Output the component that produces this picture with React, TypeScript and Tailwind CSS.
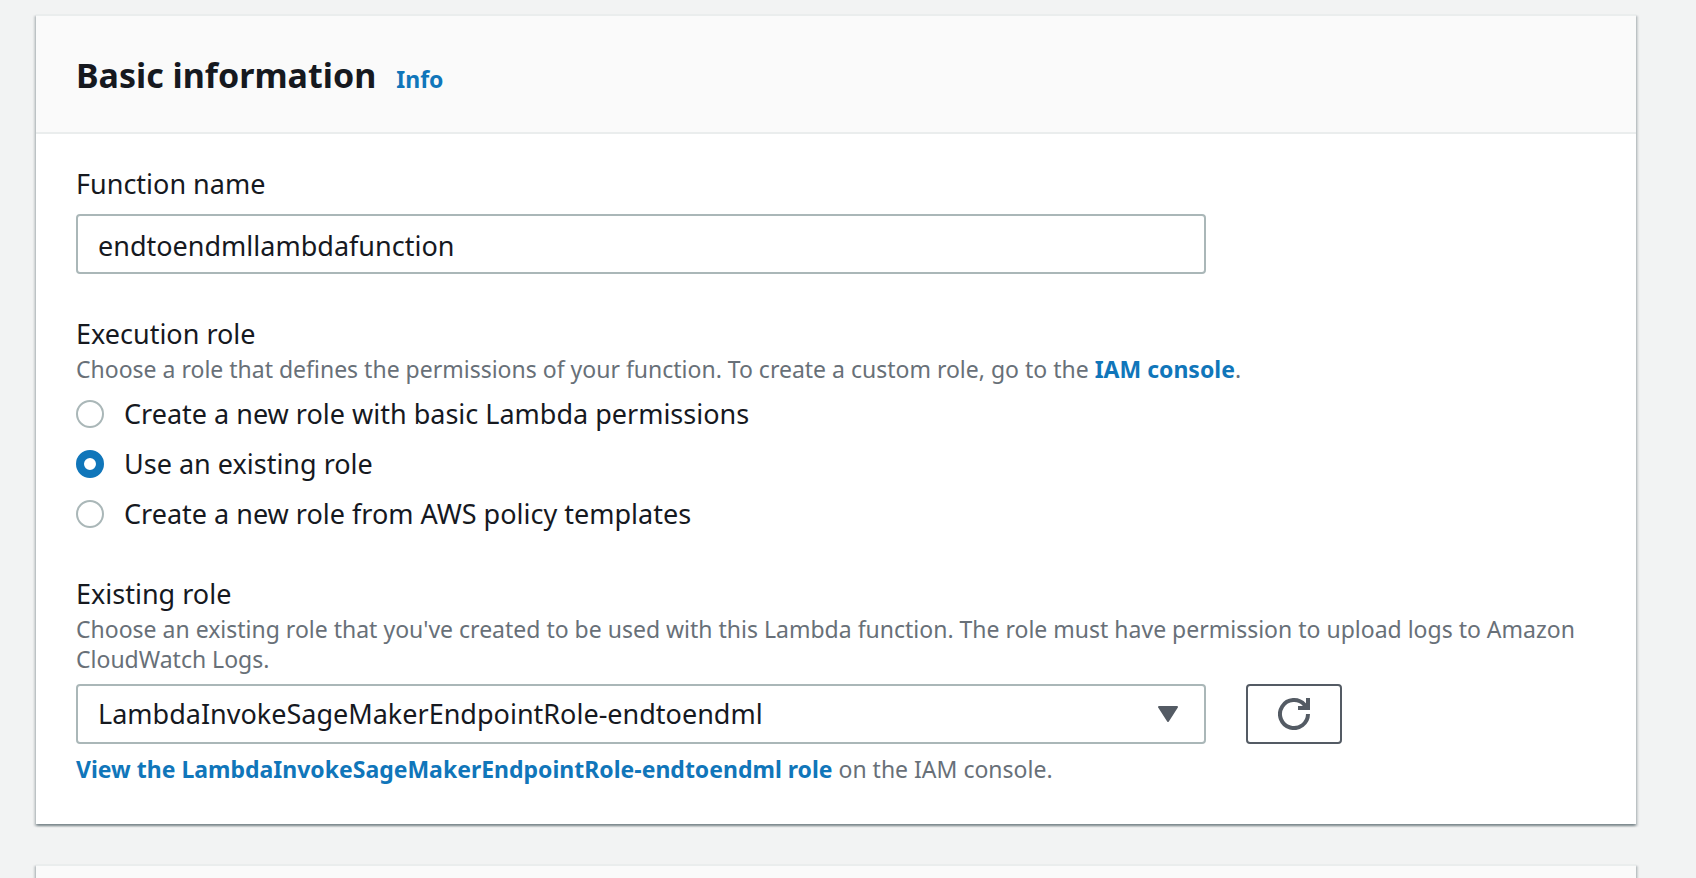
import { useState } from "react";

const roleOptions = [
  { id: "basic", label: "Create a new role with basic Lambda permissions" },
  { id: "existing", label: "Use an existing role" },
  { id: "template", label: "Create a new role from AWS policy templates" },
];

const cardClass =
  "border-t-2 border-[#eaeded] bg-white shadow-[0_2px_2px_0_rgba(0,28,36,0.3),2px_2px_2px_0_rgba(0,28,36,0.15),-2px_2px_2px_0_rgba(0,28,36,0.15)]";
const labelClass = "block text-[27px] leading-9 text-[#16191f]";
const hintClass = "text-[23px] leading-[30px] text-[#687078]";
const linkClass = "font-bold text-[#1076ba] hover:underline";

function RefreshIcon() {
  return (
    <svg width="32" height="32" viewBox="0 0 32 32" fill="none" stroke="#545b64" strokeWidth="4" aria-hidden="true">
      <path d="M30 16A14 14 0 1 1 26.6 6.9L29 10" />
      <path d="M30 0V10H20" />
    </svg>
  );
}

function CaretIcon() {
  return (
    <svg
      className="pointer-events-none absolute top-[22px] right-7"
      width="20"
      height="16"
      viewBox="0 0 20 16"
      fill="#545b64"
      stroke="#545b64"
      strokeWidth="2"
      strokeLinejoin="round"
      aria-hidden="true"
    >
      <path d="M1 1H19L10 15Z" />
    </svg>
  );
}

export default function App() {
  const [name, setName] = useState("endtoendmllambdafunction");
  const [role, setRole] = useState("existing");

  return (
    <main className="flex h-screen flex-col gap-10 overflow-hidden bg-[#f2f3f3] pt-3.5 pr-[60px] pl-9 font-['Noto_Sans',sans-serif] font-[440]">
      <section className={`${cardClass} shrink-0`}>
        <header className="flex items-baseline gap-5 border-b-2 border-[#eaeded] bg-[#fafafa] px-10 pt-[33px] pb-[31px]">
          <h2 className="text-[34px] leading-[52px] font-bold text-[#16191f]">Basic information</h2>
          <a href="#info" className={`${linkClass} text-[23px] leading-[30px]`}>
            Info
          </a>
        </header>

        <form className="px-10 pt-8 pb-10" onSubmit={(e) => e.preventDefault()}>
          <div className="grid grid-cols-4 gap-x-10">
            <div className="col-span-3">
              <label htmlFor="fn-name" className={labelClass}>
                Function name
              </label>
              <input
                id="fn-name"
                type="text"
                value={name}
                onChange={(e) => setName(e.target.value)}
                className="mt-3 block h-[60px] w-full rounded-[4px] border-2 border-[#aab7b8] bg-white px-5 pt-0.5 text-[27px] text-[#16191f]"
              />
            </div>
          </div>

          <fieldset className="mt-[42px]">
            <legend className={labelClass}>Execution role</legend>
            <p className={`${hintClass} mt-0.5 mb-[5px]`}>
              Choose a role that defines the permissions of your function. To create a custom role, go to the{" "}
              <a href="#iam" className={linkClass}>
                IAM console
              </a>
              .
            </p>
            {roleOptions.map((option) => (
              <label key={option.id} className="flex h-[50px] items-center gap-5 text-[27px] text-[#16191f]">
                <input
                  type="radio"
                  name="role"
                  checked={role === option.id}
                  onChange={() => setRole(option.id)}
                  className="size-7 shrink-0 appearance-none rounded-full border-2 border-[#aab7b8] bg-white checked:border-8 checked:border-[#1076ba]"
                />
                {option.label}
              </label>
            ))}
          </fieldset>

          <div className="mt-[37px]">
            <label htmlFor="existing-role" className={labelClass}>
              Existing role
            </label>
            <p className={`${hintClass} mt-0.5 mb-2.5`}>
              Choose an existing role that you've created to be used with this Lambda function. The role must have
              permission to upload logs to Amazon CloudWatch Logs.
            </p>
            <div className="grid grid-cols-4 gap-x-10">
              <div className="relative col-span-3">
                <select
                  id="existing-role"
                  className="block h-[60px] w-full appearance-none rounded-[4px] border-2 border-[#aab7b8] bg-white px-5 text-[27px] text-[#16191f]"
                >
                  <option>LambdaInvokeSageMakerEndpointRole-endtoendml</option>
                </select>
                <CaretIcon />
              </div>
              <button
                type="button"
                aria-label="Refresh roles"
                className="flex h-[60px] w-24 items-center justify-center rounded-[4px] border-2 border-[#545b64] bg-white"
              >
                <RefreshIcon />
              </button>
            </div>
            <p className={`${hintClass} mt-2.5`}>
              <a href="#role" className={linkClass}>
                View the LambdaInvokeSageMakerEndpointRole-endtoendml role
              </a>{" "}
              on the IAM console.
            </p>
          </div>
        </form>
      </section>

      <section className={`${cardClass} min-h-0 flex-1`}>
        <div className="h-full bg-[#fafafa]" />
      </section>
    </main>
  );
}
